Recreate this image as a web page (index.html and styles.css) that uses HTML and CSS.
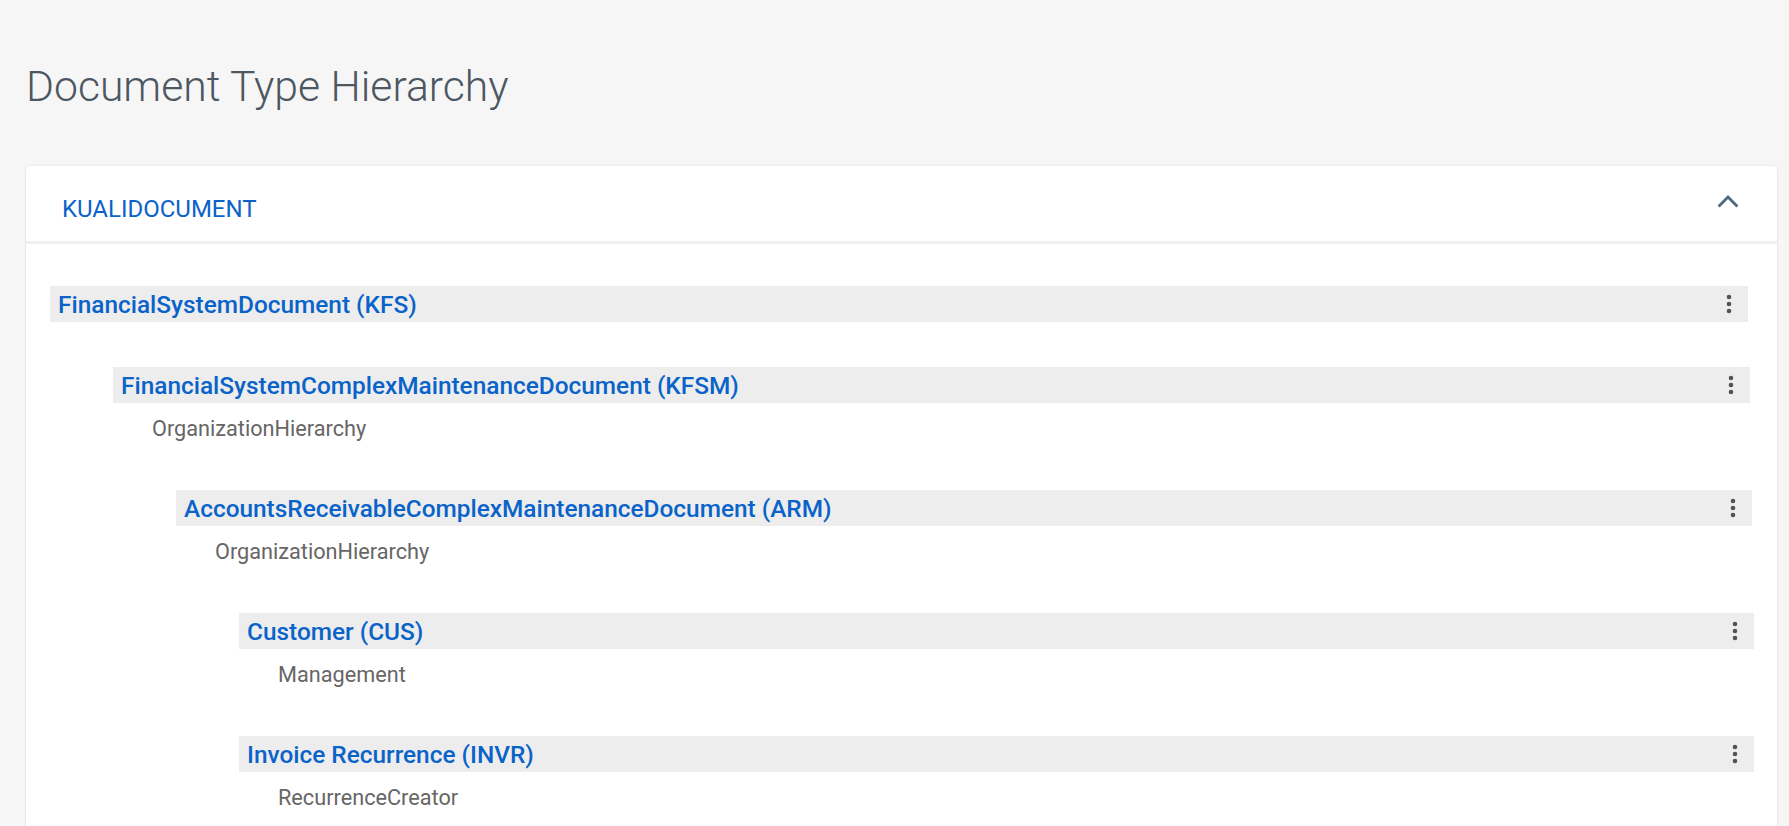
FILE: index.html
```html
<!DOCTYPE html>
<html lang="en">
<head>
<meta charset="utf-8">
<title>Document Type Hierarchy</title>
<link rel="stylesheet" href="styles.css">
</head>
<body>
<div class="page">
  <h1 class="page-title">Document Type Hierarchy</h1>
  <section class="card">
    <header class="card-header">
      <span class="card-title">KUALIDOCUMENT</span>
      <svg class="chevron" width="22" height="14" viewBox="0 0 22 14"><path d="M1.6 12.6 L11 3 L20.4 12.6" fill="none" stroke="#4f6a7e" stroke-width="2.8"/></svg>
    </header>
    <div class="card-body">
      <div class="node">
        <div class="head">
          <div class="bar"><a class="bar-link">FinancialSystemDocument (KFS)</a><svg class="kebab" width="6" height="20" viewBox="0 0 6 20"><circle cx="3" cy="3" r="2.3"/><circle cx="3" cy="10" r="2.3"/><circle cx="3" cy="17" r="2.3"/></svg></div>
        </div>
        <div class="children">
          <div class="node">
            <div class="head">
              <div class="bar"><a class="bar-link">FinancialSystemComplexMaintenanceDocument (KFSM)</a><svg class="kebab" width="6" height="20" viewBox="0 0 6 20"><circle cx="3" cy="3" r="2.3"/><circle cx="3" cy="10" r="2.3"/><circle cx="3" cy="17" r="2.3"/></svg></div>
              <div class="sub">OrganizationHierarchy</div>
            </div>
            <div class="children">
              <div class="node">
                <div class="head">
                  <div class="bar"><a class="bar-link">AccountsReceivableComplexMaintenanceDocument (ARM)</a><svg class="kebab" width="6" height="20" viewBox="0 0 6 20"><circle cx="3" cy="3" r="2.3"/><circle cx="3" cy="10" r="2.3"/><circle cx="3" cy="17" r="2.3"/></svg></div>
                  <div class="sub">OrganizationHierarchy</div>
                </div>
                <div class="children">
                  <div class="node">
                    <div class="head">
                      <div class="bar"><a class="bar-link">Customer (CUS)</a><svg class="kebab" width="6" height="20" viewBox="0 0 6 20"><circle cx="3" cy="3" r="2.3"/><circle cx="3" cy="10" r="2.3"/><circle cx="3" cy="17" r="2.3"/></svg></div>
                      <div class="sub">Management</div>
                    </div>
                  </div>
                  <div class="node">
                    <div class="head">
                      <div class="bar"><a class="bar-link">Invoice Recurrence (INVR)</a><svg class="kebab" width="6" height="20" viewBox="0 0 6 20"><circle cx="3" cy="3" r="2.3"/><circle cx="3" cy="10" r="2.3"/><circle cx="3" cy="17" r="2.3"/></svg></div>
                      <div class="sub">RecurrenceCreator</div>
                    </div>
                  </div>
                </div>
              </div>
            </div>
          </div>
        </div>
      </div>
    </div>
  </section>
</div>
</body>
</html>
```

FILE: styles.css
```css
html, body {
  margin: 0;
  padding: 0;
  background: #f6f6f6;
  overflow: hidden;
}

body {
  font-family: Roboto, "Liberation Sans", Arial, sans-serif;
}

.page {
  padding: 60px 12px 0 24px;
}

.page-title {
  margin: 0 0 0 2px;
  font-size: 42.7px;
  line-height: 52px;
  font-weight: 300;
  color: #4d5761;
}

.card {
  margin: 54px 0 0 2px;
  background: #ffffff;
  border-radius: 4px;
  box-shadow: 0 0 3px rgba(0, 0, 0, 0.10), 0 1px 2px rgba(0, 0, 0, 0.05);
  min-height: 700px;
}

.card-header {
  box-sizing: border-box;
  height: 78px;
  display: flex;
  align-items: flex-start;
  justify-content: space-between;
  padding: 0 38px 0 36px;
  border-bottom: 3px solid #f0f0f0;
}

.card-title {
  margin-top: 30px;
  font-size: 24px;
  line-height: 27px;
  color: #0a63c9;
}

.chevron {
  margin-top: 28px;
}

.card-body {
  padding: 42px 29px 0 24px;
}

.head {
  margin-bottom: 45px;
}

.bar {
  height: 36px;
  display: flex;
  align-items: center;
  justify-content: space-between;
  padding: 0 16px 0 8px;
  background: #ededed;
}

.bar-link {
  font-size: 24.4px;
  font-weight: 500;
  color: #0a63c9;
  cursor: pointer;
}

.kebab {
  fill: #505458;
}

.sub {
  padding: 13px 0 3px 39px;
  font-size: 21.7px;
  line-height: 26px;
  color: #666666;
}

.children {
  padding-left: 63px;
  margin-right: -2px;
}
```
